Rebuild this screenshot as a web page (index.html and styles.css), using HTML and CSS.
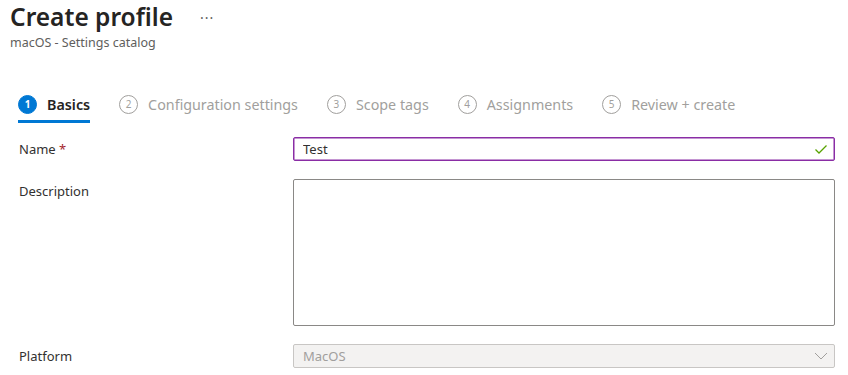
FILE: index.html
```html
<!DOCTYPE html>
<html lang="en">
<head>
  <meta charset="UTF-8" />
  <title>Create profile</title>
  <link rel="stylesheet" href="styles.css">
</head>
<body>
  <header class="page-head">
    <div class="title-row">
      <h1>Create profile</h1>
      <span class="more">&middot;&middot;&middot;</span>
    </div>
    <p class="subtitle">macOS - Settings catalog</p>
  </header>

  <!-- Wizard steps -->
  <nav class="steps">
    <div class="step active"><span class="num">1</span><span class="label">Basics</span></div>
    <div class="step"><span class="num">2</span><span class="label">Configuration settings</span></div>
    <div class="step"><span class="num">3</span><span class="label">Scope tags</span></div>
    <div class="step"><span class="num">4</span><span class="label">Assignments</span></div>
    <div class="step"><span class="num">5</span><span class="label">Review + create</span></div>
  </nav>

  <!-- Basics form -->
  <form class="form">
    <label class="field-label" for="name">Name <span class="req">*</span></label>
    <div class="input valid">
      <input id="name" type="text" value="Test" />
      <svg class="check" width="14" height="14" viewBox="0 0 14 14"><path d="M1.5 7.5 L5 11 L12.5 3.5" fill="none" stroke="#57a300" stroke-width="1.3"/></svg>
    </div>

    <label class="field-label" for="desc">Description</label>
    <textarea id="desc" class="textarea"></textarea>

    <label class="field-label">Platform</label>
    <div class="select">
      <span>MacOS</span>
      <svg width="14" height="10" viewBox="0 0 14 10"><path d="M1 2 L7 8 L13 2" fill="none" stroke="#a19f9d" stroke-width="1"/></svg>
    </div>
  </form>
</body>
</html>
```

FILE: styles.css
```css
body {
  margin: 0;
  font-family: "Noto Sans", "Open Sans", sans-serif;
  color: #323130;
  background: #fff;
}
.page-head {
  padding: 0 10px;
}
.title-row {
  display: flex;
  align-items: center;
  gap: 27px;
}
h1 {
  margin: 0;
  font-size: 24.5px;
  font-weight: 600;
  line-height: 34px;
  color: #252423;
}
.more {
  font-size: 14px;
  color: #605e5c;
  letter-spacing: 1px;
}
.subtitle {
  margin: 0;
  font-size: 12.5px;
  line-height: 18px;
  color: #605e5c;
}
/* Steps */
.steps {
  display: flex;
  gap: 29px;
  margin-top: 36px;
  padding-left: 18px;
}
.step {
  display: flex;
  align-items: center;
  gap: 10px;
  height: 32px;
  border-bottom: 3px solid transparent;
  font-size: 14.3px;
  color: #a19f9d;
}
.step.active {
  border-bottom-color: #0078d4;
  color: #252423;
  font-weight: 600;
}
.num {
  width: 17px;
  height: 17px;
  border: 1px solid #a19f9d;
  border-radius: 50%;
  display: flex;
  align-items: center;
  justify-content: center;
  font-size: 10px;
  font-weight: 400;
}
.step.active .num {
  background: #0078d4;
  border-color: #0078d4;
  color: #fff;
  font-weight: 700;
}
/* Form */
.form {
  display: grid;
  grid-template-columns: 274px 542px;
  row-gap: 18px;
  margin-top: 14px;
  padding-left: 19px;
  font-size: 13px;
}
.field-label {
  line-height: 24px;
  color: #323130;
}
.req {
  color: #a4262c;
}
.input {
  display: flex;
  align-items: center;
  height: 22px;
  border: 1px solid #8a2da5;
  border-radius: 2px;
  padding: 0 6px 0 9px;
  box-shadow: inset 0 0 0 0.5px #8a2da5;
}
.input input {
  flex: 1;
  border: none;
  outline: none;
  padding: 0;
  font: inherit;
  color: #323130;
}
.textarea {
  border: 1px solid #8a8886;
  border-radius: 2px;
  resize: none;
  padding: 0;
  box-sizing: border-box;
  height: 147px;
}
.select {
  display: flex;
  align-items: center;
  justify-content: space-between;
  height: 22px;
  border: 1px solid #c8c6c4;
  border-radius: 2px;
  background: #f3f2f1;
  padding: 0 6px 0 9px;
  color: #a19f9d;
}
```
